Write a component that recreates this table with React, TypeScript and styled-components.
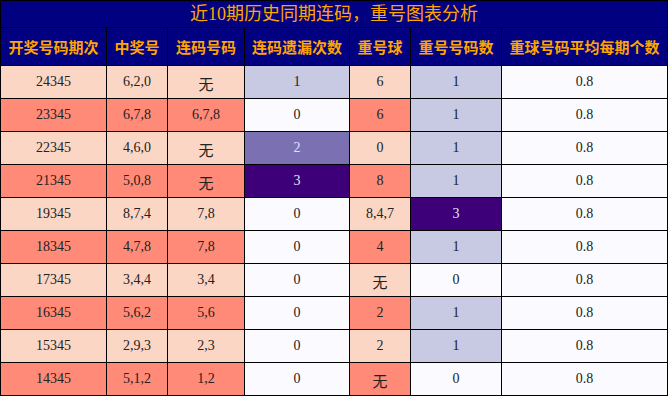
import React from "react";
import styled, { createGlobalStyle } from "styled-components";

const Global = createGlobalStyle`
  html, body { margin: 0; padding: 0; background: #ffffff; }
`;

const Grid = styled.div`
  display: grid;
  width: 668px;
  box-sizing: border-box;
  padding: 1px;
  gap: 1px;
  background: #000000;
  grid-template-columns: 105px 60px 76px 104px 60px 90px 165px;
  grid-template-rows: 26px 37px repeat(10, 32px);
`;

const Title = styled.div`
  grid-column: 1 / -1;
  background: #000080;
  color: #ffa500;
  font-family: "Liberation Serif", "Noto Sans CJK SC", serif;
  font-size: 18px;
  display: flex;
  align-items: center;
  justify-content: center;
  line-height: 1;
`;

const Head = styled.div`
  background: #000080;
  color: #ffa500;
  font-family: "Noto Sans CJK SC", sans-serif;
  font-weight: 700;
  font-size: 15px;
  display: flex;
  align-items: center;
  justify-content: center;
  white-space: nowrap;
`;

type Tone = "peach" | "salmon" | "white" | "lav" | "mid" | "dark";

const bg: Record<Tone, string> = {
  peach: "#fcd6c4",
  salmon: "#ff8a78",
  white: "#fbfbff",
  lav: "#c8cae4",
  mid: "#7b70b2",
  dark: "#3e0079",
};

const Cell = styled.div<{ $tone: Tone }>`
  background: ${(p) => bg[p.$tone]};
  color: ${(p) => (p.$tone === "mid" || p.$tone === "dark" ? "#e4e0f4" : "#222222")};
  font-family: "Liberation Serif", "Noto Sans CJK SC", serif;
  font-size: 14px;
  display: flex;
  align-items: center;
  justify-content: center;
`;

const None = styled.span`
  font-family: "Noto Sans CJK SC", sans-serif;
  font-size: 15px;
  padding-top: 3px;
`;

const headers = ["开奖号码期次", "中奖号", "连码号码", "连码遗漏次数", "重号球", "重号号码数", "重球号码平均每期个数"];

const rows: [string, string, string, string, string, string, string][] = [
  ["24345", "6,2,0", "无", "1", "6", "1", "0.8"],
  ["23345", "6,7,8", "6,7,8", "0", "6", "1", "0.8"],
  ["22345", "4,6,0", "无", "2", "0", "1", "0.8"],
  ["21345", "5,0,8", "无", "3", "8", "1", "0.8"],
  ["19345", "8,7,4", "7,8", "0", "8,4,7", "3", "0.8"],
  ["18345", "4,7,8", "7,8", "0", "4", "1", "0.8"],
  ["17345", "3,4,4", "3,4", "0", "无", "0", "0.8"],
  ["16345", "5,6,2", "5,6", "0", "2", "1", "0.8"],
  ["15345", "2,9,3", "2,3", "0", "2", "1", "0.8"],
  ["14345", "5,1,2", "1,2", "0", "无", "0", "0.8"],
];

const countTone = (v: string): Tone =>
  v === "0" ? "white" : v === "1" ? "lav" : v === "2" ? "mid" : "dark";

const show = (v: string) => (v === "无" ? <None>无</None> : v);

export default function App() {
  return (
    <>
      <Global />
      <Grid>
        <Title>近10期历史同期连码，重号图表分析</Title>
        {headers.map((h) => (
          <Head key={h}>{h}</Head>
        ))}
        {rows.map((r, i) => {
          const base: Tone = i % 2 === 0 ? "peach" : "salmon";
          return (
            <React.Fragment key={r[0]}>
              <Cell $tone={base}>{r[0]}</Cell>
              <Cell $tone={base}>{r[1]}</Cell>
              <Cell $tone={base}>{show(r[2])}</Cell>
              <Cell $tone={countTone(r[3])}>{r[3]}</Cell>
              <Cell $tone={base}>{show(r[4])}</Cell>
              <Cell $tone={countTone(r[5])}>{r[5]}</Cell>
              <Cell $tone="white">{r[6]}</Cell>
            </React.Fragment>
          );
        })}
      </Grid>
    </>
  );
}
